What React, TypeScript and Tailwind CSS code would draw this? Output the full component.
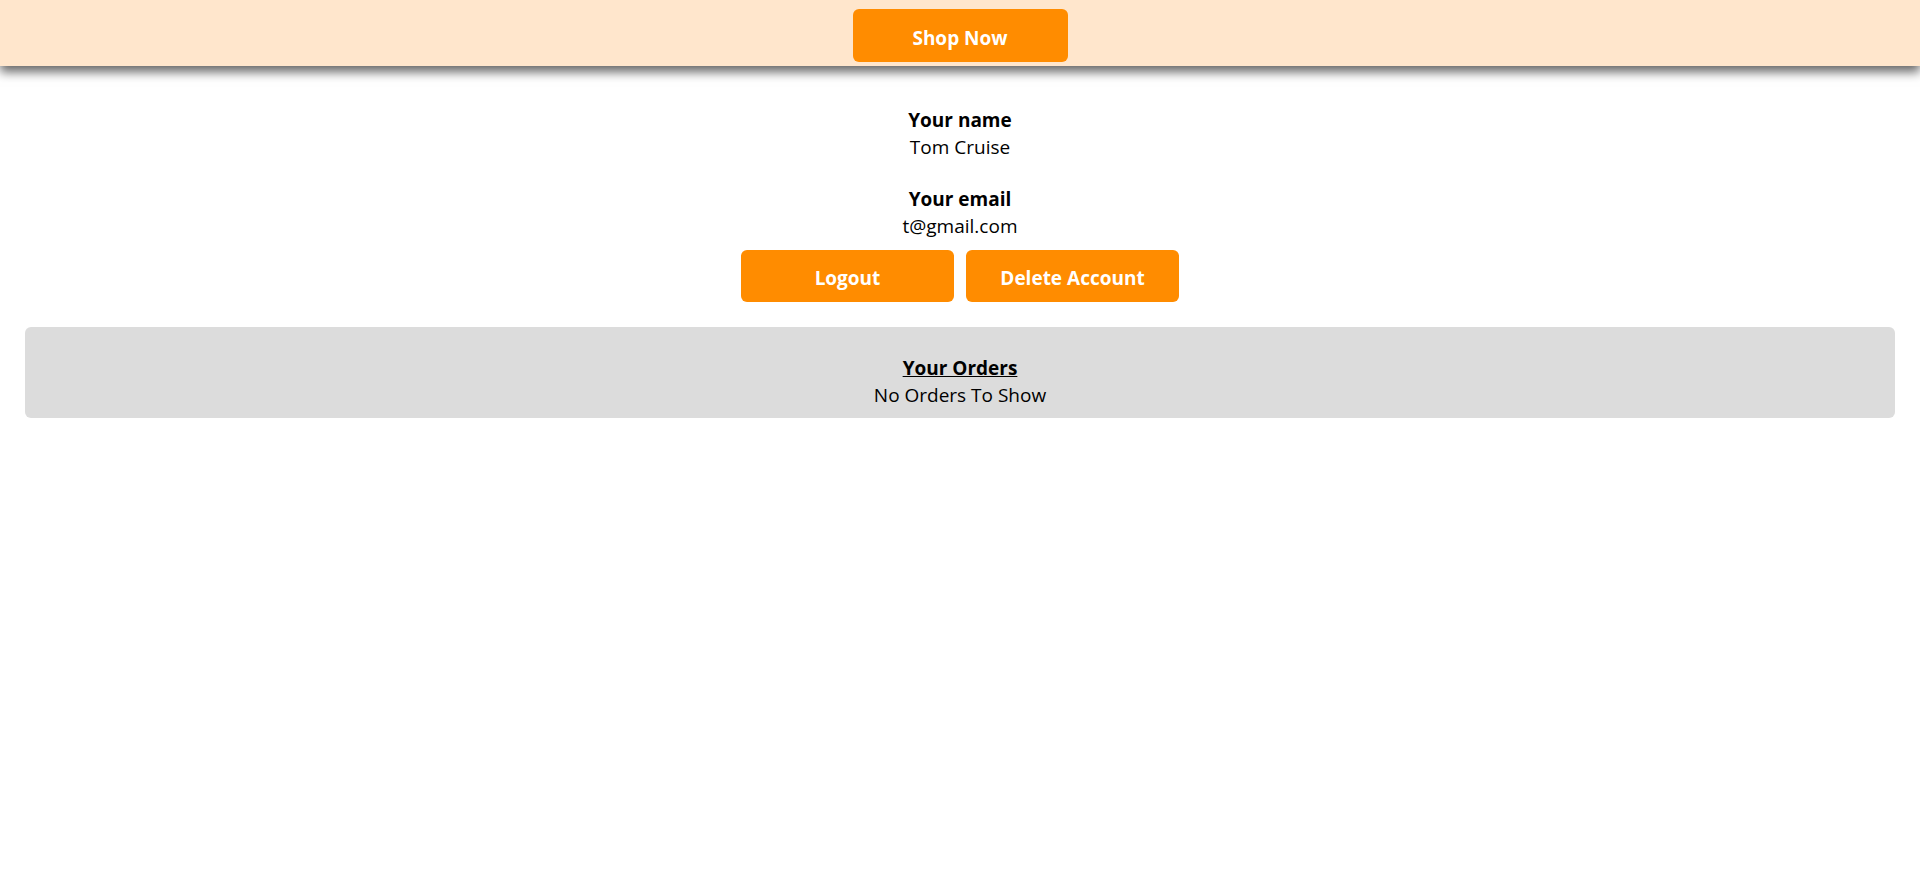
import React from "react";

export default function App() {
  const font = { fontFamily: '"Open Sans", "Noto Sans", sans-serif' };
  return (
    <div className="min-h-[885px] bg-white text-black" style={font}>
      <header className="relative z-10 flex h-[66px] justify-center bg-[#ffe6cc] pt-[9px] shadow-[0_6px_10px_rgba(0,0,0,0.6)]">
        <button className="h-[53px] w-[215px] rounded-[6px] bg-[#ff8c00] pt-[5px] text-[19px] font-bold text-white">
          Shop Now
        </button>
      </header>
      <main className="flex flex-col items-center pt-[41px] text-[19px] leading-[27px]">
        <div className="font-bold">Your name</div>
        <div>Tom Cruise</div>
        <div className="mt-[25px] font-bold">Your email</div>
        <div>t@gmail.com</div>
        <div className="mt-[10px] flex gap-[12px]">
          <button className="h-[52px] w-[213px] rounded-[6px] bg-[#ff8c00] pt-[5px] text-[19px] font-bold text-white">
            Logout
          </button>
          <button className="h-[52px] w-[213px] rounded-[6px] bg-[#ff8c00] pt-[5px] text-[19px] font-bold text-white">
            Delete Account
          </button>
        </div>
      </main>
      <section className="mx-[25px] mt-[25px] flex h-[91px] flex-col items-center justify-center rounded-[6px] border-0 bg-[#dcdcdc] pt-[18px] text-[19px] leading-[27px]">
        <div className="font-bold underline">Your Orders</div>
        <div>No Orders To Show</div>
      </section>
    </div>
  );
}
